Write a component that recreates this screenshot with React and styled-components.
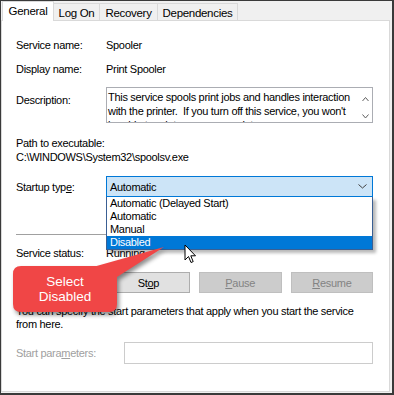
import React from 'react';
import styled, { createGlobalStyle } from 'styled-components';

const GlobalStyle = createGlobalStyle`
  body {
    margin: 0;
    padding: 0;
    background: #fff;
  }
`;

const Frame = styled.div`
  position: relative;
  width: 394px;
  height: 395px;
  box-sizing: border-box;
  border-style: solid;
  border-color: #3a3a3a;
  border-width: 1px 2px 2px 1px;
  background: #f0f0f0;
  display: flex;
  flex-direction: column;
  overflow: hidden;
  font-family: 'Liberation Sans', Arial, sans-serif;
  font-size: 11px;
  letter-spacing: -0.3px;
  color: #000;
`;

const TabStrip = styled.div`
  display: flex;
  align-items: flex-end;
  height: 19px;
  padding-left: 1px;
  position: relative;
  z-index: 1;
`;

const Tab = styled.div`
  box-sizing: border-box;
  width: ${p => p.$w}px;
  height: ${p => (p.$active ? 20 : 17)}px;
  margin-bottom: ${p => (p.$active ? -1 : 0)}px;
  margin-left: ${p => (p.$first ? 0 : -1)}px;
  border: 1px solid #d9d9d9;
  border-bottom: none;
  background: ${p => (p.$active ? '#fff' : '#f0f0f0')};
  display: flex;
  justify-content: center;
  padding-top: ${p => (p.$active ? 3 : 3)}px;
  line-height: 12px;
  font-size: 11.5px;
`;

const Panel = styled.div`
  box-sizing: border-box;
  width: 389px;
  height: 372px;
  border: 1px solid #d9d9d9;
  background: #fff;
  padding: 0 16px 0 14px;
  display: flex;
  flex-direction: column;
`;

const Row = styled.div`
  display: grid;
  grid-template-columns: 90px 1fr;
  align-items: ${p => p.$align || 'center'};
  margin-top: ${p => p.$mt}px;
  line-height: 14px;
`;

const Label = styled.div`
  color: ${p => (p.$disabled ? '#a0a0a0' : '#000')};
  margin-top: ${p => p.$mt || 0}px;
  white-space: nowrap;
`;

const Text = styled.div`
  margin-top: ${p => p.$mt || 0}px;
  line-height: ${p => p.$lh || 14}px;
  white-space: nowrap;
`;

const DescBox = styled.div`
  position: relative;
  height: 36px;
  box-sizing: border-box;
  border: 1px solid #abadb3;
  padding: 2px 20px 0 1px;
  overflow: hidden;
  line-height: 14px;
`;

const ScrollArrows = styled.div`
  position: absolute;
  right: 3px;
  top: 9px;
  display: flex;
  flex-direction: column;
  gap: 12px;
`;

const ComboWrap = styled.div`
  position: relative;
`;

const Combo = styled.div`
  height: 21px;
  box-sizing: border-box;
  border: 1px solid #0078d7;
  background: #cce4f7;
  display: flex;
  align-items: center;
  justify-content: space-between;
  padding: 0 5px 0 3px;
`;

const DropList = styled.div`
  position: absolute;
  top: 100%;
  left: 0;
  right: 0;
  border: 1px solid #3a5f93;
  border-top: none;
  background: #fff;
  box-shadow: 3px 3px 3px rgba(0, 0, 0, 0.28);
  z-index: 2;
`;

const Option = styled.div`
  height: 13px;
  line-height: 13px;
  padding-left: 3px;
  background: ${p => (p.$selected ? '#0078d7' : 'transparent')};
  color: ${p => (p.$selected ? '#fff' : '#000')};
`;

const Separator = styled.div`
  height: 1px;
  background: #a0a0a0;
  margin-top: ${p => p.$mt}px;
`;

const ButtonRow = styled.div`
  display: flex;
  justify-content: flex-end;
  gap: 9px;
  margin-top: ${p => p.$mt}px;
`;

const Button = styled.div`
  box-sizing: border-box;
  width: ${p => p.$w}px;
  height: 21px;
  border: 1px solid ${p => (p.$disabled ? '#bfbfbf' : '#adadad')};
  background: ${p => (p.$disabled ? '#cccccc' : '#e1e1e1')};
  color: ${p => (p.$disabled ? '#838383' : '#000')};
  display: flex;
  align-items: center;
  justify-content: center;
`;

const Input = styled.div`
  height: 22px;
  box-sizing: border-box;
  border: 1px solid #cccccc;
  background: #fff;
`;

const Callout = styled.div`
  position: absolute;
  left: 0;
  top: 230px;
  width: 180px;
  height: 95px;
  z-index: 5;
`;

const CalloutText = styled.div`
  position: absolute;
  left: 12px;
  top: 43px;
  width: 104px;
  text-align: center;
  color: #fff;
  font-size: 13.5px;
  letter-spacing: 0;
  line-height: 15px;
`;

const Cursor = styled.svg`
  position: absolute;
  left: 183px;
  top: 243px;
  z-index: 6;
`;

const Chevron = ({ up, color = '#555', w = 8, h = 4 }) => (
  <svg width={w} height={h + 1} viewBox={`0 0 ${w} ${h + 1}`}>
    <polyline
      points={up ? `0.5,${h} ${w / 2},0.5 ${w - 0.5},${h}` : `0.5,0.5 ${w / 2},${h} ${w - 0.5},0.5`}
      fill="none"
      stroke={color}
      strokeWidth="1"
    />
  </svg>
);

const tabs = [
  { label: 'General', w: 52 },
  { label: 'Log On', w: 47 },
  { label: 'Recovery', w: 59 },
  { label: 'Dependencies', w: 81 },
];

const options = ['Automatic (Delayed Start)', 'Automatic', 'Manual', 'Disabled'];

export default function App() {
  return (
    <>
      <GlobalStyle />
      <Frame>
        <TabStrip>
          {tabs.map((t, i) => (
            <Tab key={t.label} $w={t.w} $active={i === 0} $first={i === 0}>
              {t.label}
            </Tab>
          ))}
        </TabStrip>
        <Panel>
          <Row $mt={17}>
            <Label>Service name:</Label>
            <Text>Spooler</Text>
          </Row>
          <Row $mt={10}>
            <Label>Display name:</Label>
            <Text>Print Spooler</Text>
          </Row>
          <Row $mt={11} $align="start">
            <Label $mt={6}>Description:</Label>
            <DescBox>
              This service spools print jobs and handles interaction with the printer.&nbsp; If you turn off this service, you won't be able to print or see your printers.
              <ScrollArrows>
                <Chevron up color="#606060" w={7} h={4} />
                <Chevron color="#606060" w={7} h={4} />
              </ScrollArrows>
            </DescBox>
          </Row>
          <Text $mt={13}>Path to executable:</Text>
          <Text>C:\WINDOWS\System32\spoolsv.exe</Text>
          <Row $mt={12}>
            <Label>
              Startup typ<u>e</u>:
            </Label>
            <ComboWrap>
              <Combo>
                <span>Automatic</span>
                <Chevron color="#404040" w={9} h={4} />
              </Combo>
              <DropList>
                {options.map(o => (
                  <Option key={o} $selected={o === 'Disabled'}>
                    {o}
                  </Option>
                ))}
              </DropList>
            </ComboWrap>
          </Row>
          <Separator $mt={37} />
          <Row $mt={11}>
            <Label>Service status:</Label>
            <Text>Running</Text>
          </Row>
          <ButtonRow $mt={12}>
            <Button $w={83}>
              <u>S</u>tart
            </Button>
            <Button $w={83}>
              St<u>o</u>p
            </Button>
            <Button $w={84} $disabled>
              <u>P</u>ause
            </Button>
            <Button $w={83} $disabled>
              <u>R</u>esume
            </Button>
          </ButtonRow>
          <Text $mt={12} $lh={13}>
            You can specify the start parameters that apply when you start the service
            <br />
            from here.
          </Text>
          <Row $mt={11} style={{ gridTemplateColumns: '108px 1fr' }}>
            <Label $disabled>
              Start para<u>m</u>eters:
            </Label>
            <Input />
          </Row>
        </Panel>

        <Callout>
          <svg width="180" height="95" viewBox="0 230 180 95" style={{ overflow: 'visible', filter: 'drop-shadow(2px 3px 2px rgba(0,0,0,0.45))' }}>
            <path
              d="M20 265 H108 Q116 265 116 273 V303 Q116 311 108 311 H20 Q12 311 12 303 V273 Q12 265 20 265 Z M92 266 L163 246 L116 276 Z"
              fill="#f04646"
            />
          </svg>
          <CalloutText>
            Select
            <br />
            Disabled
          </CalloutText>
        </Callout>

        <Cursor width="13" height="21" viewBox="0 0 13 21">
          <path
            d="M1 1 L1 16 L4.5 12.5 L7 18.5 L9.2 17.6 L6.8 11.8 L11.5 11.8 Z"
            fill="#fff"
            stroke="#000"
            strokeWidth="1"
            strokeLinejoin="round"
          />
        </Cursor>
      </Frame>
    </>
  );
}
